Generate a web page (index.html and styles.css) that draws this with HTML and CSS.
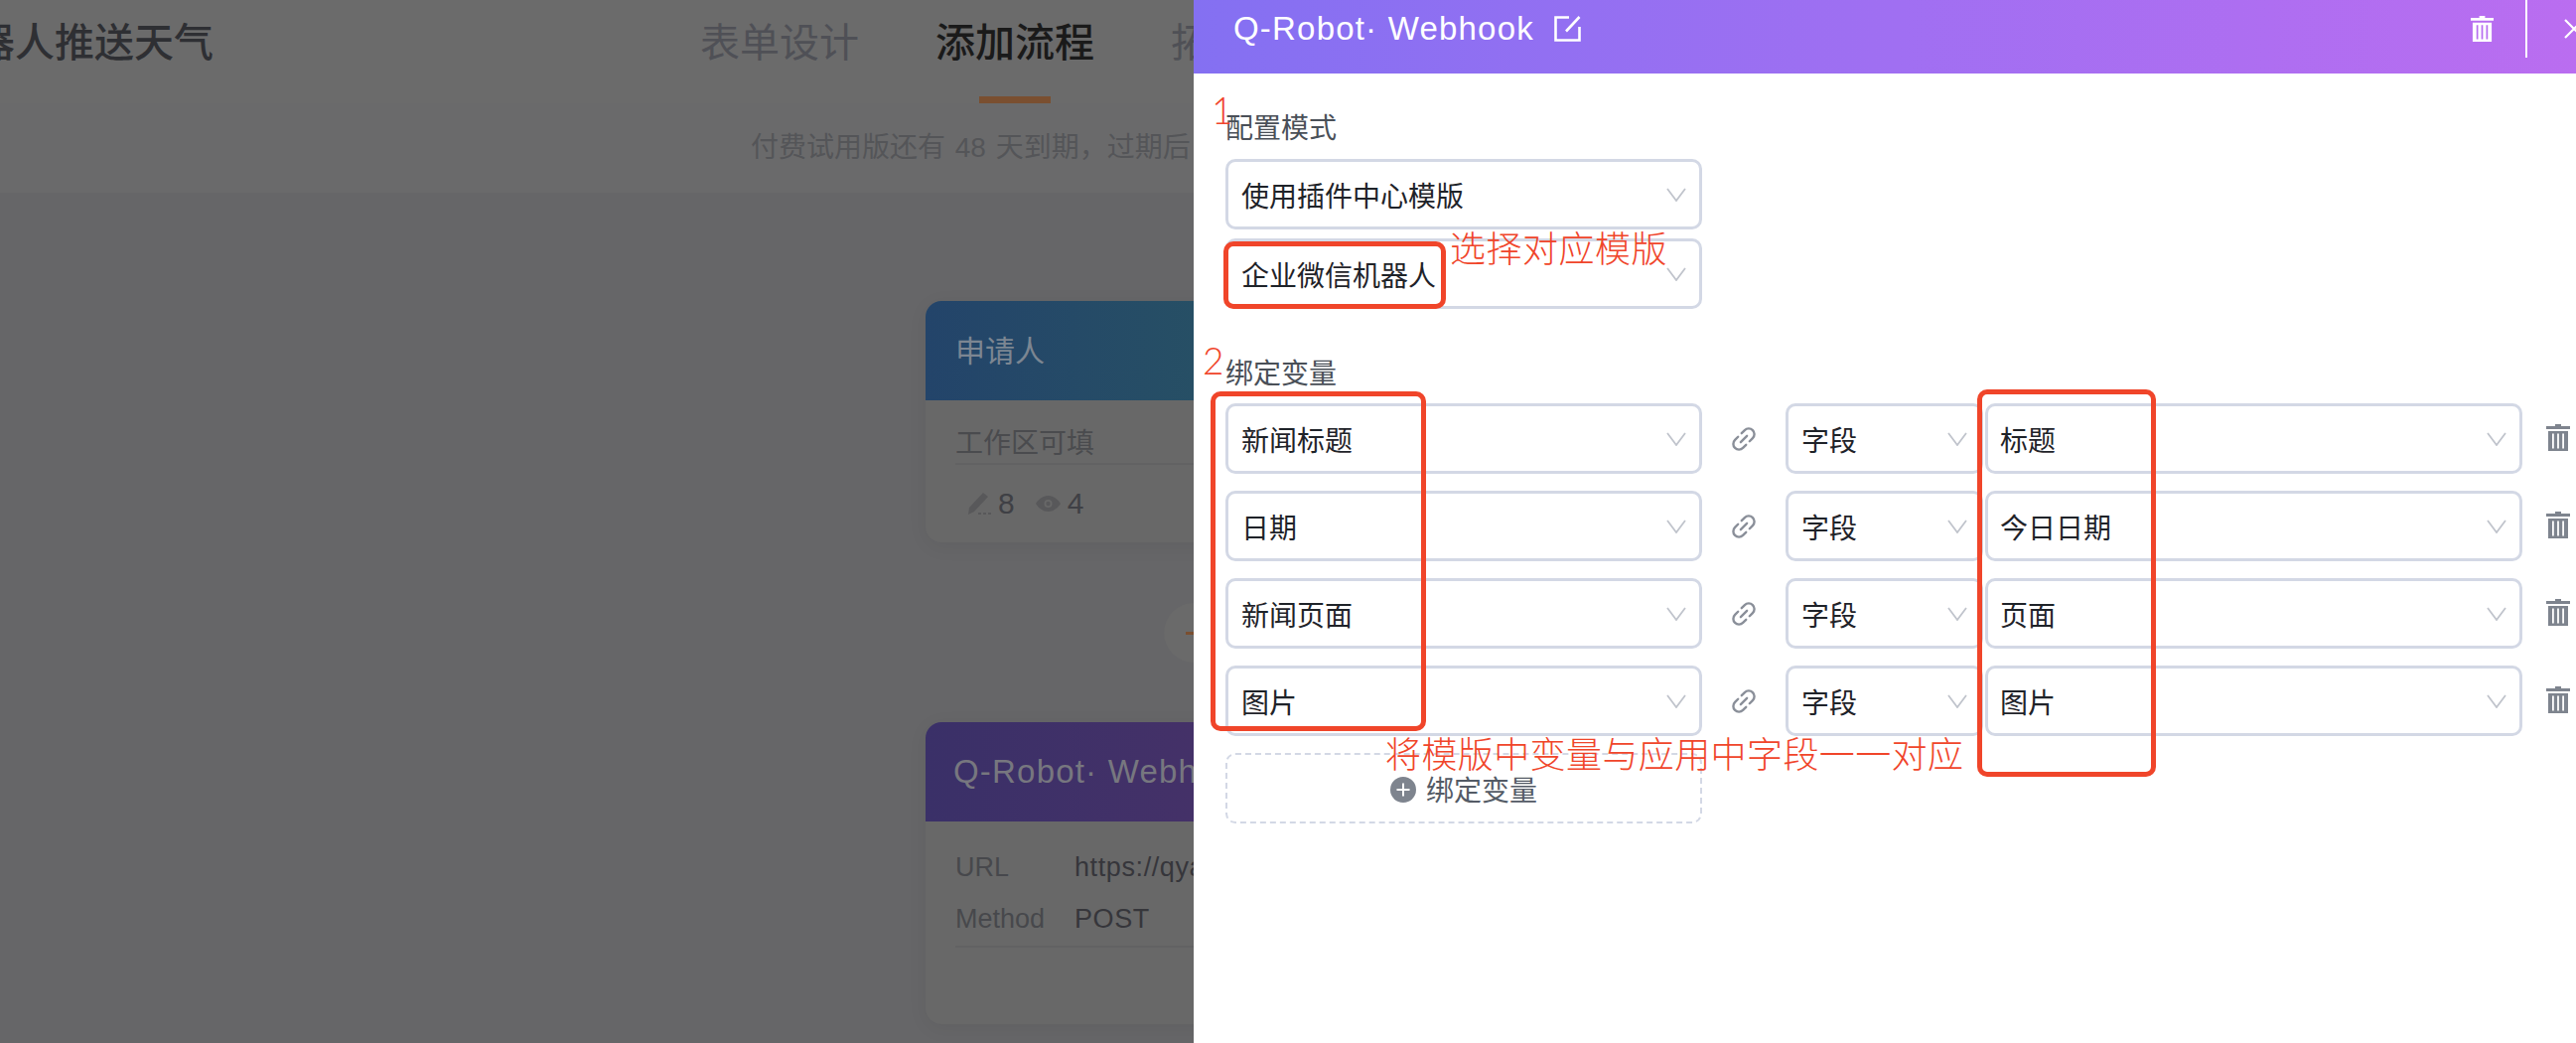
FILE: index.html
```html
<!DOCTYPE html>
<html lang="zh-CN">
<head>
  <meta charset="UTF-8" />
  <title>Q-Robot Webhook</title>
  <link rel="stylesheet" href="styles.css">
</head>
<body>
  <svg class="sprites" width="0" height="0">
    <symbol id="chevron" viewBox="0 0 20 14"><path d="M1 1l9 12 9-12" fill="none" stroke="currentColor" stroke-width="1.8"/></symbol>
    <symbol id="trash" viewBox="0 0 24 27"><path fill-rule="evenodd" d="M9 0h6v2h9v3H0V2h9z M2 7h20v20H2z M6 9.500v15h1.800v-15z M11.100 9.500v15h1.800v-15z M16.200 9.500v15h1.800v-15z"/></symbol>
    <symbol id="link" viewBox="2.5 2.5 19 19"><g transform="rotate(-45 12 12)" fill="none" stroke="currentColor" stroke-width="1.9" stroke-linecap="round"><path d="M10 7.500H6.500a4.500 4.500 0 0 0 0 9H10"/><path d="M14 7.500h3.500a4.500 4.500 0 0 1 0 9H14"/><path d="M8.500 12h7"/></g></symbol>
  </svg>

  <div class="page">
    <header class="topbar">
      <div class="app-title">机器人推送天气</div>
      <nav class="tabs">
        <div class="tab">表单设计</div>
        <div class="tab active">添加流程<i></i></div>
        <div class="tab">拓</div>
      </nav>
    </header>
    <div class="notice">付费试用版还有 48 天到期，过期后</div>

    <main class="flow">
      <section class="node">
        <div class="node-head blue">申请人</div>
        <div class="node-body">
          <div class="node-line">工作区可填</div>
          <div class="node-stats">
            <svg class="stat-icon" viewBox="0 0 25 24"><path d="M17 1l5 4L8 20l-6 3 1-7z M12 21h3v2h-3z M17 21h3v2h-3z M22 21h3v2h-3z" fill="#58585a"/></svg>
            <span>8</span>
            <svg class="stat-icon eye" viewBox="0 0 25 16"><path fill-rule="evenodd" d="M12.500 0C18 0 22.500 4 25 8c-2.500 4-7 8-12.500 8S2.500 12 0 8C2.500 4 7 0 12.500 0z M12.500 4a4 4 0 1 0 0 8 4 4 0 0 0 0-8z" fill="#58585a"/><circle cx="12.500" cy="8" r="2.200" fill="#58585a"/></svg>
            <span>4</span>
          </div>
        </div>
      </section>

      <div class="add-node"><i></i></div>

      <section class="node tall">
        <div class="node-head purple">Q-Robot· Webhook</div>
        <div class="node-body">
          <div class="kv"><span>URL</span><b>https://qyapi.weixin.qq.com</b></div>
          <div class="kv"><span>Method</span><b>POST</b></div>
          <div class="kv-rule"></div>
        </div>
      </section>
    </main>
  </div>

  <aside class="drawer">
    <div class="drawer-head">
      <span class="drawer-title">Q-Robot· Webhook</span>
      <svg class="edit-icon" viewBox="0 0 27 26"><path d="M15 1.500H1.500v23h24V11 M25.500 1L12 15.500" fill="none" stroke="#fff" stroke-width="2.600"/></svg>
      <div class="drawer-actions">
        <svg class="head-trash"><use href="#trash"/></svg>
        <span class="head-sep"></span>
        <svg class="head-close" viewBox="0 0 20 20"><path d="M1 1l18 18M19 1L1 19" stroke="#fff" stroke-width="2.200"/></svg>
      </div>
    </div>

    <div class="drawer-body">
      <div class="field-label">配置模式</div>
      <div class="select">使用插件中心模版<svg class="chevron"><use href="#chevron"/></svg></div>
      <div class="select second">企业微信机器人<svg class="chevron"><use href="#chevron"/></svg></div>

      <div class="field-label bind">绑定变量</div>
      <div class="bind-rows">
        <div class="bind-row">
          <div class="select">新闻标题<svg class="chevron"><use href="#chevron"/></svg></div>
          <div class="link-cell"><svg class="link-icon"><use href="#link"/></svg></div>
          <div class="select kind">字段<svg class="chevron"><use href="#chevron"/></svg></div>
          <div class="select value">标题<svg class="chevron"><use href="#chevron"/></svg></div>
          <svg class="row-trash"><use href="#trash"/></svg>
        </div>
        <div class="bind-row">
          <div class="select">日期<svg class="chevron"><use href="#chevron"/></svg></div>
          <div class="link-cell"><svg class="link-icon"><use href="#link"/></svg></div>
          <div class="select kind">字段<svg class="chevron"><use href="#chevron"/></svg></div>
          <div class="select value">今日日期<svg class="chevron"><use href="#chevron"/></svg></div>
          <svg class="row-trash"><use href="#trash"/></svg>
        </div>
        <div class="bind-row">
          <div class="select">新闻页面<svg class="chevron"><use href="#chevron"/></svg></div>
          <div class="link-cell"><svg class="link-icon"><use href="#link"/></svg></div>
          <div class="select kind">字段<svg class="chevron"><use href="#chevron"/></svg></div>
          <div class="select value">页面<svg class="chevron"><use href="#chevron"/></svg></div>
          <svg class="row-trash"><use href="#trash"/></svg>
        </div>
        <div class="bind-row">
          <div class="select">图片<svg class="chevron"><use href="#chevron"/></svg></div>
          <div class="link-cell"><svg class="link-icon"><use href="#link"/></svg></div>
          <div class="select kind">字段<svg class="chevron"><use href="#chevron"/></svg></div>
          <div class="select value">图片<svg class="chevron"><use href="#chevron"/></svg></div>
          <svg class="row-trash"><use href="#trash"/></svg>
        </div>
      </div>
      <div class="add-bind">
        <svg class="plus-icon" viewBox="0 0 26 26"><circle cx="13" cy="13" r="13" fill="#7e848e"/><path d="M13 6.500v13M6.500 13h13" stroke="#fff" stroke-width="2"/></svg>
        绑定变量
      </div>
    </div>
  </aside>

  <!-- red notes drawn on top of the screenshot -->
  <div class="note num one">1</div>
  <div class="note num two">2</div>
  <div class="note pick">选择对应模版</div>
  <div class="note match">将模版中变量与应用中字段一一对应</div>
  <div class="mark mark-tpl"></div>
  <div class="mark mark-vars"></div>
  <div class="mark mark-fields"></div>
</body>
</html>
```

FILE: styles.css
```css
* {
  box-sizing: border-box;
}

body {
  margin: 0;
  width: 2594px;
  height: 1050px;
  position: relative;
  overflow: hidden;
  background: #666668;
  font-family: "Liberation Sans", "Noto Sans CJK SC", sans-serif;
  font-size: 28px;
}

.sprites {
  position: absolute;
}

/* page behind the drawer, already dimmed */
.topbar {
  height: 104px;
  background: #6b6b6b;
  display: flex;
  overflow: hidden;
}

.app-title {
  margin-left: -65px;
  padding-top: 18px;
  font-size: 40px;
  line-height: 50px;
  font-weight: 500;
  color: #2e2f33;
  white-space: nowrap;
}

.tabs {
  display: flex;
  gap: 77px;
  margin-left: 490px;
}

.tab {
  display: flex;
  flex-direction: column;
  align-items: center;
  padding-top: 18px;
  font-size: 40px;
  line-height: 50px;
  color: #4f5056;
  white-space: nowrap;
}

.tab.active {
  color: #1a1a1a;
  font-weight: 500;
}

.tab i {
  margin-top: auto;
  width: 72px;
  height: 7px;
  background: #7a4f30;
}

.notice {
  height: 90px;
  background: #6a6a6b;
  padding: 27px 0 0 756px;
  font-size: 28px;
  line-height: 36px;
  word-spacing: 2px;
  color: #545558;
  white-space: nowrap;
  overflow: hidden;
}

.flow {
  width: 540px;
  margin-left: 932px;
  padding-top: 109px;
  display: flex;
  flex-direction: column;
  align-items: center;
}

.node {
  width: 100%;
  height: 243px;
  border-radius: 16px;
  overflow: hidden;
  background: #686868;
  box-shadow: 0 4px 20px rgba(0, 0, 0, 0.06);
}

.node.tall {
  height: 304px;
}

.node-head {
  height: 100px;
  padding: 0 0 5px 30px;
  display: flex;
  align-items: center;
  font-size: 30px;
  white-space: nowrap;
}

.node-head.blue {
  background: linear-gradient(90deg, #23446a, #2a5a60);
  color: #7c8692;
}

.node-head.purple {
  background: linear-gradient(90deg, #3a3068, #4e3268);
  color: #77777f;
  padding: 0 0 0 28px;
  font-size: 33px;
  letter-spacing: 1.2px;
}

.node-body {
  padding: 0 30px;
}

.node-line {
  height: 65px;
  padding-top: 24px;
  line-height: 40px;
  color: #4a4b4e;
  border-bottom: 2px solid #626263;
}

.node-stats {
  display: flex;
  align-items: center;
  gap: 7px;
  padding: 21px 0 0 11px;
  font-size: 30px;
  line-height: 36px;
  color: #3f4045;
}

.stat-icon {
  width: 25px;
  height: 24px;
}

.stat-icon.eye {
  height: 16px;
  margin-left: 14px;
}

.kv {
  display: flex;
  height: 52px;
  align-items: center;
  font-size: 27px;
  color: #47484c;
}

.kv:first-child {
  margin-top: 20px;
}

.kv span {
  width: 120px;
}

.kv b {
  font-weight: 400;
  color: #36363b;
  white-space: nowrap;
  letter-spacing: 0.6px;
}

.kv-rule {
  margin-top: 1px;
  height: 2px;
  background: #626263;
}

.add-node {
  position: relative;
  width: 60px;
  height: 60px;
  margin: 61px 0 60px;
  border-radius: 50%;
  background: #6a6a6a;
}

.add-node i {
  position: absolute;
  left: 22px;
  top: 29px;
  width: 20px;
  height: 3px;
  background: #7a4f30;
}

/* drawer */
.drawer {
  position: absolute;
  left: 1202px;
  top: 0;
  bottom: 0;
  width: 1420px;
  background: #fff;
}

.drawer-head {
  height: 74px;
  padding: 0 20px 17px 40px;
  display: flex;
  align-items: center;
  background: linear-gradient(92deg, #8470f2, #a06ff2 50%, #bb6df0);
}

.drawer-title {
  font-size: 33px;
  line-height: 40px;
  letter-spacing: 1.2px;
  color: #fff;
  white-space: nowrap;
}

.edit-icon {
  width: 27px;
  height: 26px;
  margin-left: 20px;
}

.drawer-actions {
  margin-left: auto;
  display: flex;
  align-items: center;
}

.head-trash {
  width: 23px;
  height: 26px;
  fill: #fff;
}

.head-sep {
  width: 2px;
  height: 59px;
  margin: 0 37px 0 32px;
  background: #fff;
}

.head-close {
  width: 20px;
  height: 20px;
}

.drawer-body {
  padding: 36px 0 0 32px;
}

.field-label {
  height: 40px;
  line-height: 40px;
  margin-bottom: 10px;
  color: #4a5058;
}

.field-label.bind {
  margin: 46px 0 9px;
}

.select {
  width: 480px;
  height: 71px;
  padding-left: 13px;
  display: flex;
  align-items: center;
  justify-content: space-between;
  flex: none;
  border: 3px solid #d3d8e5;
  border-radius: 10px;
  color: #1f2329;
  white-space: nowrap;
}

.select.second {
  margin-top: 9px;
}

.chevron {
  width: 20px;
  height: 14px;
  margin-right: 13px;
  color: #c0c4cc;
}

.bind-rows {
  display: flex;
  flex-direction: column;
  gap: 17px;
}

.bind-row {
  display: flex;
  align-items: center;
}

.link-cell {
  width: 84px;
  flex: none;
  display: flex;
  justify-content: center;
}

.link-icon {
  width: 24px;
  height: 24px;
  color: #8a8f99;
}

.select.kind {
  width: 199px;
}

.select.value {
  width: 541px;
  margin-left: 2px;
  padding-left: 12px;
}

.row-trash {
  width: 24px;
  height: 27px;
  margin: -2px 0 0 24px;
  flex: none;
  fill: #7e848e;
}

.add-bind {
  width: 480px;
  height: 71px;
  margin-top: 17px;
  display: flex;
  align-items: center;
  gap: 10px;
  padding-left: 164px;
  border: 2px dashed #d3d8e5;
  border-radius: 10px;
  color: #545b66;
}

.plus-icon {
  width: 26px;
  height: 26px;
  margin-top: 2px;
}

/* annotations */
.note {
  position: absolute;
  color: #f0452a;
  white-space: nowrap;
  font-size: 36px;
  line-height: 44px;
  font-weight: 300;
}

.note.num {
  font-family: "Lato", sans-serif;
  font-size: 37px;
}

.note.one {
  left: 1220px;
  top: 89px;
}

.note.two {
  left: 1211px;
  top: 341px;
}

.note.pick {
  left: 1460px;
  top: 230px;
  letter-spacing: 0.5px;
}

.note.match {
  left: 1395px;
  top: 739px;
  letter-spacing: 0.4px;
}

.mark {
  position: absolute;
  border: 5px solid #f0452a;
  border-radius: 10px;
}

.mark-tpl {
  left: 1232px;
  top: 243px;
  width: 224px;
  height: 68px;
}

.mark-vars {
  left: 1219px;
  top: 394px;
  width: 217px;
  height: 342px;
}

.mark-fields {
  left: 1991px;
  top: 392px;
  width: 180px;
  height: 390px;
}
```
